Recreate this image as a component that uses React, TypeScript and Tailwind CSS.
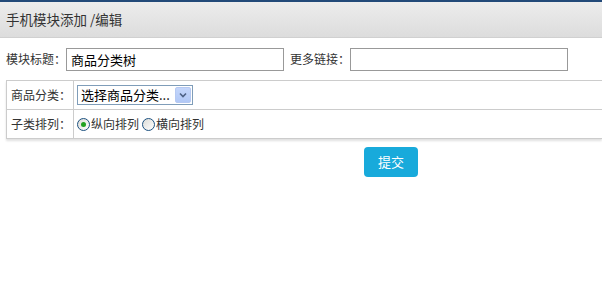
import { useState } from 'react';

const font = { fontFamily: '"Noto Sans CJK SC", "Noto Sans", sans-serif' };

function Radio({ checked, label, onClick }: { checked: boolean; label: string; onClick: () => void }) {
  return (
    <label className="flex items-center cursor-pointer" onClick={onClick}>
      <span className="w-[13px] h-[13px] rounded-full border border-[#1c5180] bg-gradient-to-br from-[#dcdcd7] to-white flex items-center justify-center">
        {checked && <span className="w-[5px] h-[5px] rounded-full bg-[#21a121]" />}
      </span>
      <span className="ml-[1px]">{label}</span>
    </label>
  );
}

export default function App() {
  const [title, setTitle] = useState('商品分类树');
  const [link, setLink] = useState('');
  const [order, setOrder] = useState<'v' | 'h'>('v');

  return (
    <div className="w-[602px] h-[305px] bg-white text-[#333] overflow-hidden" style={font}>
      {/* top strip */}
      <div className="h-[2px] bg-[#234a79]" />

      {/* Header */}
      <div className="h-[36px] bg-gradient-to-b from-[#ededed] to-[#dcdcdc] border-b border-[#d0d0d0] flex items-center px-[6px]">
        <span className="text-[13.5px] text-[#333]">手机模块添加 /编辑</span>
      </div>

      {/* Title / link row */}
      <div className="flex items-center h-[24px] mt-[9px] px-[6px] text-[12px]">
        <span>模块标题：</span>
        <input
          value={title}
          onChange={(e) => setTitle(e.target.value)}
          className="w-[218px] h-[23px] border border-[#999] px-[4px] text-[13px] text-black outline-none"
        />
        <span className="ml-[6px]">更多链接：</span>
        <input
          value={link}
          onChange={(e) => setLink(e.target.value)}
          className="w-[218px] h-[23px] border border-[#999] px-[4px] text-[13px] text-black outline-none"
        />
      </div>

      {/* table */}
      <div className="ml-[6px] mt-[9px] border border-[#ccc] border-r-0 shadow-[0_2px_2px_rgba(0,0,0,0.12)] text-[12px]">
        <div className="flex h-[29px] border-b border-[#ccc]">
          <div className="w-[67px] border-r border-[#ccc] flex items-center pl-[4px]">商品分类：</div>
          <div className="flex items-center pl-[3px]">
            <div className="w-[116px] h-[20px] border border-[#7f9db9] flex items-center justify-between pl-[3px] pr-[1px] bg-white">
              <span className="text-[13px] text-black">选择商品分类...</span>
              <span className="w-[16px] h-[16px] rounded-[2px] bg-gradient-to-b from-[#c4d6fb] to-[#b1c8f6] border border-[#b6c9f2] flex items-center justify-center">
                <svg width="8" height="6" viewBox="0 0 8 6">
                  <path d="M1 1.5 L4 4.5 L7 1.5" stroke="#4d6185" strokeWidth="1.6" fill="none" />
                </svg>
              </span>
            </div>
          </div>
        </div>
        <div className="flex h-[28px]">
          <div className="w-[67px] border-r border-[#ccc] flex items-center pl-[4px]">子类排列：</div>
          <div className="flex items-center pl-[3px] gap-[3px]">
            <Radio checked={order === 'v'} label="纵向排列" onClick={() => setOrder('v')} />
            <Radio checked={order === 'h'} label="横向排列" onClick={() => setOrder('h')} />
          </div>
        </div>
      </div>

      {/* submit */}
      <div className="flex justify-center mt-[8px] pl-[180px]">
        <button className="w-[54px] h-[30px] rounded-[4px] bg-[#18aadb] text-white text-[13px]">提交</button>
      </div>
    </div>
  );
}
